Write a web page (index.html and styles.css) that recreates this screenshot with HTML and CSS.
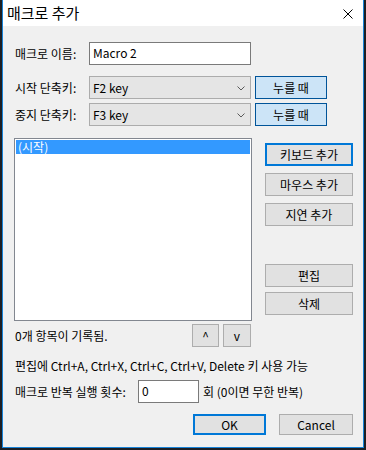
FILE: index.html
```html
<!doctype html>
<html>
  <head>
    <meta charset="utf-8">
    <title>매크로 추가</title>
    <link rel="stylesheet" href="styles.css">
  </head>
  <body>
    <div class="window">
      <div class="titlebar">
        <span class="title">매크로 추가</span>
        <svg class="close" width="10" height="10" viewBox="0 0 10 10">
          <path d="M0.5 0.5 L9.5 9.5 M9.5 0.5 L0.5 9.5" stroke="#000" stroke-width="1" fill="none"/>
        </svg>
      </div>

      <div class="content">
        <div class="fields">
          <span class="label">매크로 이름:</span>
          <div class="textbox">Macro 2</div>
          <span></span>

          <span class="label">시작 단축키:</span>
          <div class="combo">
            <span>F2 key</span>
            <svg width="8" height="5" viewBox="0 0 8 5"><path d="M0.5 0.5 L4 4 L7.5 0.5" stroke="#5a5a5a" fill="none"/></svg>
          </div>
          <div class="btn btn-pressed">누를 때</div>

          <span class="label">중지 단축키:</span>
          <div class="combo">
            <span>F3 key</span>
            <svg width="8" height="5" viewBox="0 0 8 5"><path d="M0.5 0.5 L4 4 L7.5 0.5" stroke="#5a5a5a" fill="none"/></svg>
          </div>
          <div class="btn btn-pressed">누를 때</div>
        </div>

        <div class="middle">
          <div class="left">
            <div class="list">
              <div class="item selected">(시작)</div>
            </div>
            <div class="count-row">
              <span>0개 항목이 기록됨.</span>
              <div class="arrows">
                <div class="btn btn-small">^</div>
                <div class="btn btn-small">v</div>
              </div>
            </div>
          </div>
          <div class="side">
            <div class="btn btn-focus">키보드 추가</div>
            <div class="btn side-gap">마우스 추가</div>
            <div class="btn side-gap">지연 추가</div>
            <div class="btn side-gap-big">편집</div>
            <div class="btn side-gap-small">삭제</div>
          </div>
        </div>

        <p class="hint">편집에 Ctrl+A, Ctrl+X, Ctrl+C, Ctrl+V, Delete 키 사용 가능</p>

        <div class="repeat-row">
          <span class="repeat-label">매크로 반복 실행 횟수:</span>
          <div class="textbox textbox-small">0</div>
          <span>회 (0이면 무한 반복)</span>
        </div>

        <div class="actions">
          <div class="btn btn-focus btn-ok">OK</div>
          <div class="btn btn-cancel">Cancel</div>
        </div>
      </div>
    </div>
  </body>
</html>
```

FILE: styles.css
```css
html, body {
  margin: 0;
  padding: 0;
  background: #1c1f24;
  font-family: "Noto Sans CJK KR", "Noto Sans", sans-serif;
  font-size: 12px;
  color: #000000;
}

.window {
  margin-left: 2px;
  width: 362px;
  height: 448px;
  box-sizing: border-box;
  border: 1px solid #1883d7;
  border-top: none;
  background: #f0f0f0;
  display: flex;
  flex-direction: column;
}

.titlebar {
  height: 26px;
  background: #ffffff;
  display: flex;
  align-items: center;
  justify-content: space-between;
  padding: 0 10px 0 4px;
  flex-shrink: 0;
}

.title {
  font-size: 15px;
  line-height: 20px;
  margin-top: -1px;
}

.close {
  display: block;
  margin-top: 1px;
}

.content {
  padding: 16px 10px 0 11px;
}

/* top fields */
.fields {
  display: grid;
  grid-template-columns: 74px 162px 76px;
  grid-template-rows: 30px 23px 23px;
  row-gap: 4px;
  align-items: start;
  margin-left: 1px;
}

.fields .label {
  line-height: 23px;
}

.fields .btn-pressed {
  margin-left: 4px;
}

.textbox {
  height: 23px;
  box-sizing: border-box;
  background: #ffffff;
  border: 1px solid #7a7a7a;
  padding: 0 0 0 3px;
  line-height: 20px;
}

.combo {
  height: 23px;
  box-sizing: border-box;
  background: #e5e5e5;
  border: 1px solid #acacac;
  padding: 0 5px 0 3px;
  display: flex;
  align-items: center;
  justify-content: space-between;
}

.combo svg {
  display: block;
  margin-top: 1px;
}

.btn {
  height: 23px;
  box-sizing: border-box;
  background: #e1e1e1;
  border: 1px solid #adadad;
  display: flex;
  align-items: center;
  justify-content: center;
  line-height: 16px;
}

.btn-pressed {
  background: #cce4f7;
  border-color: #005499;
}

.btn-focus {
  border: 2px solid #0078d7;
}

/* list and side buttons */
.middle {
  display: flex;
  margin-top: 12px;
}

.left {
  width: 238px;
}

.list {
  height: 183px;
  box-sizing: border-box;
  background: #ffffff;
  border: 1px solid #828790;
  padding: 1px;
}

.item {
  height: 14px;
  line-height: 14px;
  padding-left: 2px;
}

.item.selected {
  background: #3399ff;
  color: #ffffff;
}

.count-row {
  display: flex;
  align-items: center;
  justify-content: space-between;
  margin-top: 3px;
  padding-left: 1px;
  line-height: 16px;
}

.arrows {
  display: flex;
  gap: 4px;
  margin-right: 1px;
}

.btn-small {
  width: 27px;
}

.btn-small:last-child {
  width: 28px;
}

.side {
  width: 88px;
  margin-left: 13px;
  padding-top: 5px;
}

.side-gap {
  margin-top: 7px;
}

.side-gap-big {
  margin-top: 38px;
}

.side-gap-small {
  margin-top: 5px;
}

.hint {
  margin: 11px 0 0 1px;
  line-height: 16px;
}

.repeat-row {
  display: flex;
  align-items: center;
  margin: 6px 0 0 1px;
  line-height: 16px;
}

.repeat-label {
  width: 123px;
}

.textbox-small {
  width: 61px;
  margin-right: 4px;
}

.actions {
  display: flex;
  justify-content: flex-end;
  gap: 13px;
  margin-top: 11px;
}

.btn-ok {
  width: 73px;
  height: 21px;
}

.btn-cancel {
  width: 74px;
  height: 21px;
}
```
